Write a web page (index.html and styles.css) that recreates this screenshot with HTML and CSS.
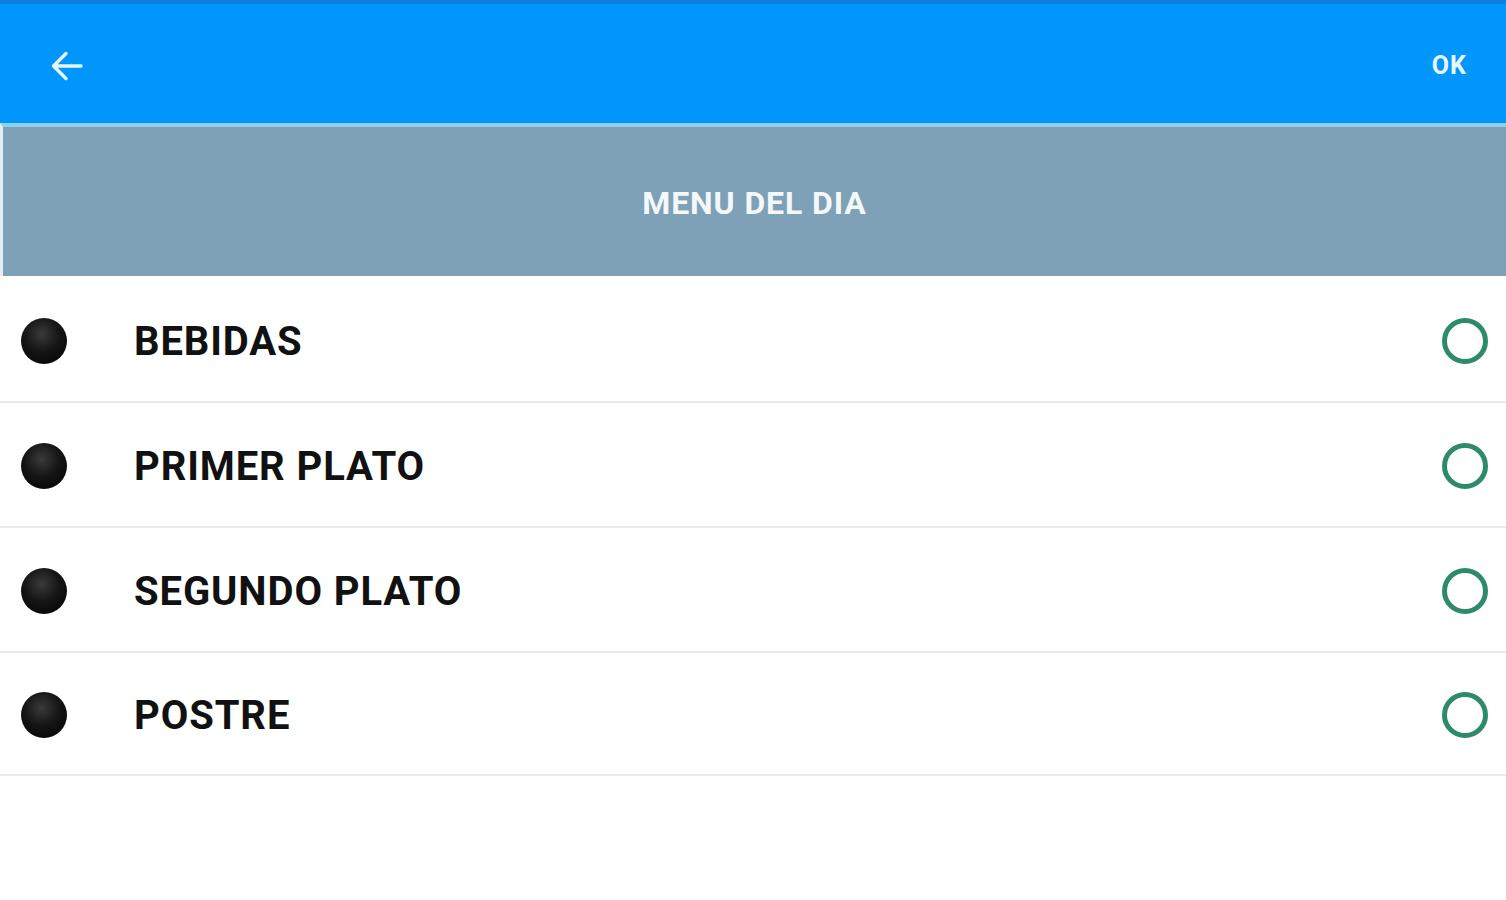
FILE: index.html
```html
<!DOCTYPE html>
<html>
<head>
<meta charset="utf-8">
<link rel="stylesheet" href="styles.css">
</head>
<body>
<div class="app">
  <header class="topbar">
    <button class="back" aria-label="back">
      <svg width="34" height="34" viewBox="0 0 34 34"><path d="M31 17H4M16 4.5L3.5 17 16 29.5" fill="none" stroke="#e8f6ff" stroke-width="3.4" stroke-linecap="round" stroke-linejoin="round"/></svg>
    </button>
    <span class="ok">OK</span>
  </header>
  <div class="section">MENU DEL DIA</div>
  <ul class="list">
    <li class="row"><span class="dot"></span><span class="label">BEBIDAS</span><span class="ring"></span></li>
    <li class="row"><span class="dot"></span><span class="label">PRIMER PLATO</span><span class="ring"></span></li>
    <li class="row"><span class="dot"></span><span class="label">SEGUNDO PLATO</span><span class="ring"></span></li>
    <li class="row"><span class="dot"></span><span class="label">POSTRE</span><span class="ring"></span></li>
  </ul>
</div>
</body>
</html>
```
FILE: styles.css
```css
* { box-sizing: border-box; }
html, body { margin: 0; padding: 0; background: #fff; }
body { font-family: Roboto, "Liberation Sans", sans-serif; width: 1506px; height: 900px; overflow: hidden; }
.app { display: flex; flex-direction: column; }
.topbar {
  height: 123px;
  background: #0096fc;
  border-top: 4px solid #0b80dc;
  display: flex;
  align-items: center;
  justify-content: space-between;
  padding: 4px 39px 0 50px;
}
.back { background: none; border: 0; padding: 0; display: flex; }
.ok { color: #eaf7ff; font-weight: 700; font-size: 25px; letter-spacing: 1px; }
.section {
  height: 153px;
  border-top: 4px solid #8fd0f0;
  border-left: 3px solid #e6edf2;
  background: #7fa1b7;
  color: #f4f8fb;
  font-weight: 700;
  font-size: 32px;
  letter-spacing: 0.9px;
  padding-top: 2px;
  display: flex;
  align-items: center;
  justify-content: center;
}
.list { list-style: none; margin: 2px 0 0; padding: 0; }
.row {
  height: 125px;
  display: flex;
  align-items: center;
  border-bottom: 2px solid #e9e9e9;
  padding: 0 18px 0 21px;
}
.row:last-child { height: 123px; }
.dot {
  width: 46px; height: 46px; border-radius: 50%;
  margin-top: 2px;
  background: radial-gradient(circle at 45% 35%, #3a3a3a 0%, #151515 45%, #000 100%);
  flex: none;
}
.label {
  margin-left: 67px;
  margin-top: 3px;
  font-weight: 700;
  font-size: 40px;
  letter-spacing: 0.9px;
  color: #111;
  flex: 1;
}
.ring {
  width: 46px; height: 46px; border-radius: 50%;
  margin-top: 2px;
  border: 5px solid #2e8a6c;
  flex: none;
}
```
